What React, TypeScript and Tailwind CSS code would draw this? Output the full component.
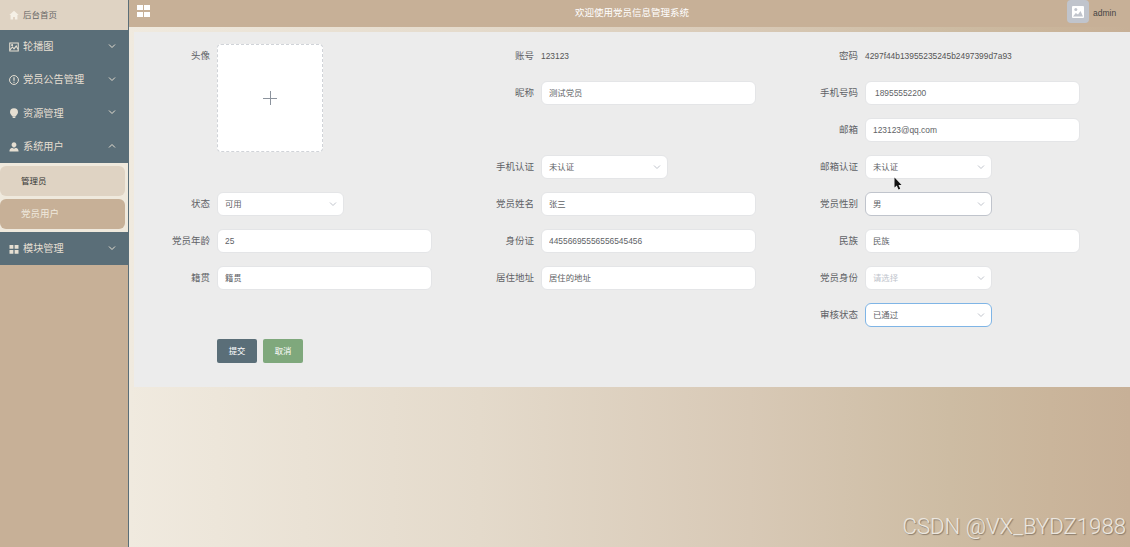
import { ReactNode } from "react";
import clsx from "clsx";

type IconName = "home" | "picture" | "warning" | "bulb" | "user" | "grid";

function MenuIcon({ name }: { name: IconName }) {
  return (
    <svg viewBox="0 0 16 16" className="h-[10px] w-[10px] shrink-0" fill="currentColor">
      {name === "home" && <path d="M8 1 .5 8h2v7h4v-4h3v4h4V8h2z" />}
      {name === "picture" && (
        <g fill="none" stroke="currentColor" strokeWidth="1.7">
          <path d="M1.2 1.5h13.6v13H1.2z" />
          <path d="M1.5 12.5 5.5 8l2.5 3 3.5-4.5 3 5" />
          <circle cx="5" cy="5" r="0.8" />
        </g>
      )}
      {name === "warning" && (
        <g fill="none" stroke="currentColor" strokeWidth="1.6">
          <circle cx="8" cy="8" r="7.1" />
          <path d="M8 3.6v5.6M8 10.6v1.8" strokeWidth="2" />
        </g>
      )}
      {name === "bulb" && (
        <path d="M8 .2a6.4 6.4 0 0 0-6.4 6.4c0 2.6 2 3.8 3.1 6.2h6.6c1.1-2.4 3.1-3.6 3.1-6.2A6.4 6.4 0 0 0 8 .2zM5.3 13h5.4l-.8 2.8H6.1z" />
      )}
      {name === "user" && (
        <path d="M8 .5a3.9 3.9 0 0 0-2.4 7L8 9l2.4-1.5A3.9 3.9 0 0 0 8 .5zM5 9.2C2.3 9.8.7 11.5.7 15.3h14.6c0-3.8-1.6-5.5-4.3-6.1l-3 1.6z" />
      )}
      {name === "grid" && <path d="M.8 1.5h6.2v6H.8zM9 1.5h6.2v6H9zM.8 9.5h6.2v6H.8zM9 9.5h6.2v6H9z" />}
    </svg>
  );
}

function Chevron({ up = false, className }: { up?: boolean; className?: string }) {
  return (
    <svg
      viewBox="0 0 8 8"
      className={clsx("h-2 w-2 shrink-0", up && "rotate-180", className)}
      fill="none"
      stroke="currentColor"
    >
      <path d="M1 2.5 4 5.5 7 2.5" />
    </svg>
  );
}

function MenuItem({ icon, label, open }: { icon: IconName; label: string; open?: boolean }) {
  return (
    <div className="flex h-[33.3px] items-center bg-[#5a6e78] pr-3 pl-[9px] text-[#e6dfd2]">
      <MenuIcon name={icon} />
      <span className="ml-1 flex-1 text-[10.2px]">{label}</span>
      <Chevron up={open} className="-mt-0.5" />
    </div>
  );
}

function Sidebar() {
  return (
    <aside className="w-[129px] shrink-0 border-r border-[#5a6e78] bg-[#c7b097]">
      <div className="flex h-[30px] items-center bg-[#dfd3c3] pl-[9px] text-[#f5f0e6]">
        <MenuIcon name="home" />
        <span className="ml-1 text-[8.5px] text-[#666]">后台首页</span>
      </div>
      <MenuItem icon="picture" label="轮播图" />
      <MenuItem icon="warning" label="党员公告管理" />
      <MenuItem icon="bulb" label="资源管理" />
      <MenuItem icon="user" label="系统用户" open />
      <div className="flex h-[69px] flex-col gap-[3px] bg-[#efe9dd] py-[3px] pr-[3px]">
        <div className="flex h-[30px] items-center rounded-md bg-[#dfd3c3] pl-[21px] text-[8.5px] text-[#333]">
          管理员
        </div>
        <div className="flex h-[30px] items-center rounded-md bg-[#c7b097] pl-[21px] text-[9.5px] text-[#efe9dd]">
          党员用户
        </div>
      </div>
      <MenuItem icon="grid" label="模块管理" />
    </aside>
  );
}

function Header() {
  return (
    <header className="flex h-[27px] items-start bg-[#c7b097]">
      <div className="w-[68px] pt-[5px] pl-2">
        <svg viewBox="0 0 13 12" className="h-3 w-[13px]" fill="#fff">
          <path d="M0 0h6v5H0zM7 0h6v5H7zM0 7h6v5H0zM7 7h6v5H7z" />
        </svg>
      </div>
      <h1 className="flex-1 pt-[5px] text-center text-[9.5px] leading-4 text-white">欢迎使用党员信息管理系统</h1>
      <div className="flex w-[63px] items-start">
        <div className="flex h-[23px] w-[22px] items-center justify-center rounded-[4px] bg-[#c0c4cc]">
          <svg viewBox="0 0 12 12" className="h-3 w-3">
            <rect width="12" height="12" rx="1" fill="#fff" />
            <circle cx="3.8" cy="3.5" r="1.5" fill="#c0c4cc" />
            <path d="M1 10.5 3.8 7 6 8.5 8.5 5l2.5 5.5z" fill="#c0c4cc" />
          </svg>
        </div>
        <span className="ml-1 pt-[7px] text-[8.5px] leading-3 text-[#444]">admin</span>
      </div>
    </header>
  );
}

function Field({ label, className, children }: { label: string; className?: string; children: ReactNode }) {
  return (
    <div className={clsx("flex items-center", className)}>
      <label className="mr-[7px] w-[76px] shrink-0 pt-px text-right text-[9.5px] text-[#606266]">{label}</label>
      {children}
    </div>
  );
}

function Input({ value, className }: { value: string; className?: string }) {
  return (
    <input
      readOnly
      defaultValue={value}
      className={clsx(
        "h-6 w-[215px] rounded-[6px] border border-[#e4e5e7] bg-white px-[7px] text-[8.4px] text-[#606266] outline-none",
        className,
      )}
    />
  );
}

function Select({
  value,
  border = "border-[#e4e5e7]",
  placeholder,
}: {
  value: string;
  border?: string;
  placeholder?: boolean;
}) {
  return (
    <div
      className={clsx(
        "flex h-6 w-[127px] items-center justify-between rounded-[6px] border bg-white pr-[6px] pl-[7px] text-[8.4px]",
        border,
        placeholder ? "text-[#c0c4cc]" : "text-[#606266]",
      )}
    >
      <span className="pt-px">{value}</span>
      <Chevron className="text-[#c0c4cc]" />
    </div>
  );
}

function UserForm() {
  return (
    <section className="mt-[5px] ml-[5px] h-[355px] bg-[#ececec] pt-[5px]">
      <div className="grid grid-cols-[324px_324px_324px] grid-rows-[repeat(9,37px)]">
        <div className="row-span-4 flex pt-[7px]">
          <label className="mr-[7px] w-[76px] text-right text-[9.5px] leading-[23px] text-[#606266]">头像</label>
          <div className="flex h-[108px] w-[106px] items-center justify-center rounded-[4px] border border-dashed border-[#d0d3d8] bg-white">
            <svg viewBox="0 0 14 14" className="h-[14px] w-[14px]" stroke="#8c939d">
              <path d="M7.5 0v14M0 7.5h14" />
            </svg>
          </div>
        </div>
        <Field label="账号">
          <span className="pt-px text-[8.4px] text-[#555]">123123</span>
        </Field>
        <Field label="密码">
          <span className="pt-px text-[8.4px] text-[#555]">4297f44b13955235245b2497399d7a93</span>
        </Field>
        <Field label="昵称">
          <Input value="测试党员" className="pb-0.5" />
        </Field>
        <Field label="手机号码">
          <Input value="18955552200" className="pl-[9px]" />
        </Field>
        <Field label="邮箱" className="col-start-3">
          <Input value="123123@qq.com" />
        </Field>
        <Field label="手机认证" className="col-start-2">
          <Select value="未认证" />
        </Field>
        <Field label="邮箱认证">
          <Select value="未认证" />
        </Field>
        <Field label="状态">
          <Select value="可用" />
        </Field>
        <Field label="党员姓名">
          <Input value="张三" className="pb-0.5" />
        </Field>
        <Field label="党员性别">
          <Select value="男" border="border-[#c0c4cc]" />
        </Field>
        <Field label="党员年龄">
          <Input value="25" />
        </Field>
        <Field label="身份证">
          <Input value="44556695556556545456" />
        </Field>
        <Field label="民族">
          <Input value="民族" className="pb-0.5" />
        </Field>
        <Field label="籍贯">
          <Input value="籍贯" className="pb-0.5" />
        </Field>
        <Field label="居住地址">
          <Input value="居住的地址" className="pb-0.5" />
        </Field>
        <Field label="党员身份">
          <Select value="请选择" placeholder />
        </Field>
        <Field label="审核状态" className="col-start-3">
          <Select value="已通过" border="border-[#7fb5e6]" />
        </Field>
        <div className="flex items-start gap-[6px] pt-[6px] pl-[83px] text-[8.4px] text-white">
          <button className="h-6 w-10 rounded-[2px] bg-[#5a6e78]">提交</button>
          <button className="h-6 w-10 rounded-[2px] bg-[#7fa87c]">取消</button>
        </div>
      </div>
    </section>
  );
}

export default function App() {
  return (
    <div className="relative flex h-[547px] w-[1130px] overflow-hidden font-['Liberation_Sans','Noto_Sans_CJK_SC',sans-serif]">
      <Sidebar />
      <main className="min-w-0 flex-1 bg-[linear-gradient(90deg,#f0eadf_0%,#e4dacb_35%,#d8c9b6_62%,#cdbca3_82%,#cab59b_92%,#c7b097_100%)]">
        <Header />
        <UserForm />
      </main>

      {/* Mouse pointer */}
      <svg viewBox="0 0 8 13" className="absolute top-[177px] left-[894px] h-[13px] w-2">
        <path d="M.5.5v10l2.3-2 1.7 4 1.7-.8-1.7-3.7h3z" fill="#111" />
      </svg>

      {/* Watermark */}
      <div className="absolute right-1 bottom-[7px] font-['Roboto',sans-serif] text-[22.2px] leading-[28px] font-light whitespace-nowrap text-[#ebe6df] [text-shadow:1px_1px_1px_#8a7c6c]">
        CSDN @VX_BYDZ1988
      </div>
    </div>
  );
}
